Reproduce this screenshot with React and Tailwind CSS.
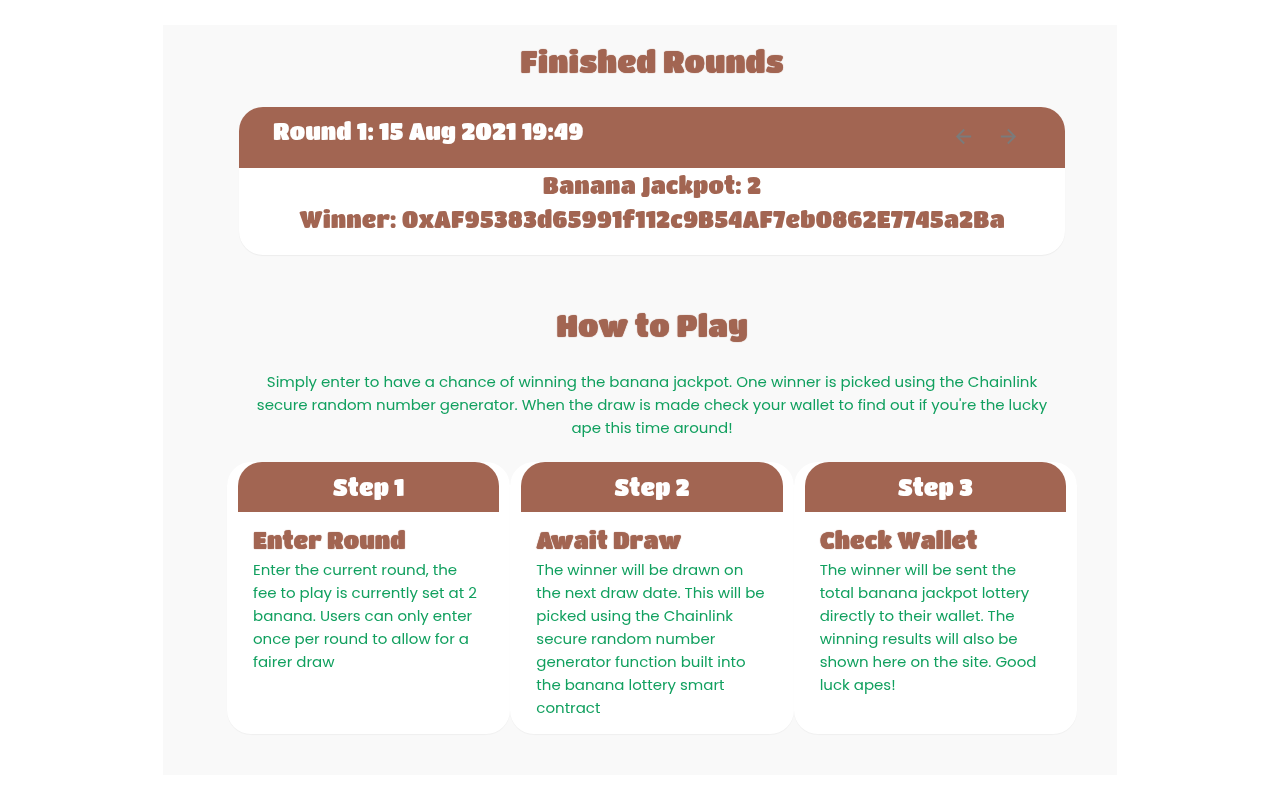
const steps = [
  { n: 1, title: "Enter Round", text: "Enter the current round, the fee to play is currently set at 2 banana. Users can only enter once per round to allow for a fairer draw" },
  { n: 2, title: "Await Draw", text: "The winner will be drawn on the next draw date. This will be picked using the Chainlink secure random number generator function built into the banana lottery smart contract" },
  { n: 3, title: "Check Wallet", text: "The winner will be sent the total banana jackpot lottery directly to their wallet. The winning results will also be shown here on the site. Good luck apes!" },
];

function Arrow({ label, d }) {
  return (
    <button type="button" aria-label={label} disabled className="p-[11px]">
      <svg viewBox="0 0 24 24" fill="currentColor" className="size-[23px] text-[#7b7b7b]"><path d={d} /></svg>
    </button>
  );
}

function Heading({ children }) {
  return (
    <h2 className="text-center font-['Titan_One','Inter',sans-serif] text-[30px] leading-[45px] text-[#a26552] [text-shadow:0_0_1px_#a26552]">{children}</h2>
  );
}

export default function App() {
  return (
    <div className="px-4 py-[25px] font-['Poppins','Open_Sans',sans-serif] text-[#11a05f] antialiased will-change-transform">
      <main className="mx-auto max-w-[954px] bg-[#f9f9f9] pt-[14px] pr-10 pb-[41px] pl-16">
        <section className="px-3">
          <Heading>Finished Rounds</Heading>
          <article className="mt-[23px] overflow-hidden rounded-3xl bg-white pb-[19px] text-center font-['Titan_One','Inter',sans-serif] text-[23px] leading-[34px] text-[#a26552] shadow-[0_1px_1px_rgba(0,0,0,0.05)]">
            <header className="flex h-[61px] items-start justify-between bg-[#a26552] px-[34px] text-white">
              <h3 className="pt-[7px]">Round 1: 15 Aug 2021 19:49</h3>
              <nav aria-label="Rounds" className="flex pt-[7px]">
                <Arrow label="Previous round" d="M20 11H7.83l5.59-5.59L12 4l-8 8 8 8 1.41-1.41L7.83 13H20v-2z" />
                <Arrow label="Next round" d="M12 4l-1.41 1.41L16.17 11H4v2h12.17l-5.58 5.59L12 20l8-8z" />
              </nav>
            </header>
            <p>Banana Jackpot: 2</p>
            <p className="break-words">Winner: 0xAF95383d65991f112c9B54AF7eb0862E7745a2Ba</p>
          </article>
        </section>
        <section className="mt-12">
          <Heading>How to Play</Heading>
          <p className="mt-[22px] px-6 text-center text-[15px] leading-[23px]">
            Simply enter to have a chance of winning the banana jackpot. One winner is picked using the Chainlink secure random number generator. When the draw is made check your wallet to find out if you're the lucky ape this time around!
          </p>
          <div className="mt-[23px] grid grid-cols-1 md:grid-cols-3">
            {steps.map((s) => (
              <article key={s.n} className="rounded-3xl bg-white px-[11px] pb-[15px] shadow-[0_1px_1px_rgba(0,0,0,0.04)]">
                <header className="rounded-t-3xl bg-[#a26552] text-center font-['Titan_One','Inter',sans-serif] text-[23px] leading-[50px] text-white">Step {s.n}</header>
                <div className="px-[15px] pt-[11px]">
                  <h3 className="mb-px font-['Titan_One','Inter',sans-serif] text-[23px] leading-[34px] text-[#a26552] [text-shadow:0_0_1px_#a26552]">{s.title}</h3>
                  <p className="text-[15px] leading-[23px]">{s.text}</p>
                </div>
              </article>
            ))}
          </div>
        </section>
      </main>
    </div>
  );
}
